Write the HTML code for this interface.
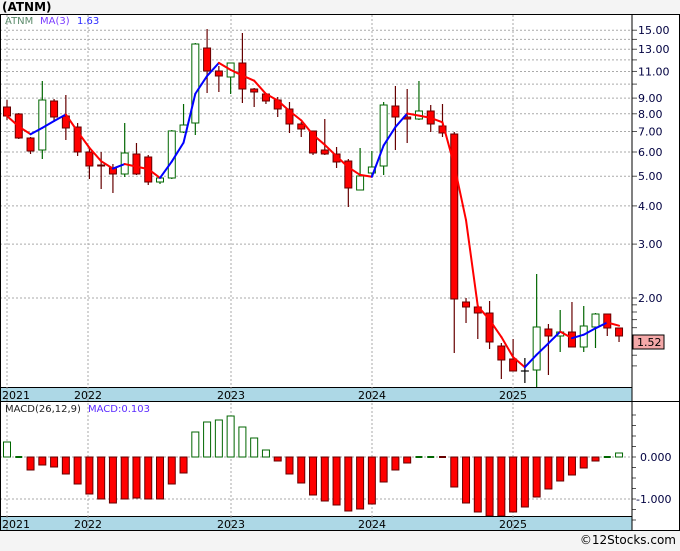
<!DOCTYPE html>
<html><head><meta charset="utf-8"><style>
html,body{margin:0;padding:0;background:#f4f4f4;}
body{width:680px;height:546px;overflow:hidden;font-family:"Liberation Sans",sans-serif;}
svg text{font-family:"DejaVu Sans","Liberation Sans",sans-serif;}
</style></head><body>
<svg id="s" width="680" height="546" xmlns="http://www.w3.org/2000/svg">
<rect x="0" y="0" width="680" height="546" fill="#f4f4f4"/>
<rect x="0" y="14" width="680" height="516" fill="#ffffff"/>
<text x="2" y="11" font-size="12" font-weight="bold" fill="#000">(ATNM)</text>
<g id="g"></g>
<rect x="0" y="387" width="632" height="14" fill="#add8e6"/>
<rect x="0" y="516" width="632" height="14" fill="#add8e6"/>
<line x1="0" y1="14.5" x2="680" y2="14.5" stroke="#000"/>
<line x1="0" y1="387.5" x2="632" y2="387.5" stroke="#000"/>
<line x1="0" y1="401.5" x2="680" y2="401.5" stroke="#000"/>
<line x1="0" y1="516.5" x2="632" y2="516.5" stroke="#000"/>
<line x1="0" y1="530.5" x2="680" y2="530.5" stroke="#000"/>
<line x1="632" y1="14" x2="632" y2="530" stroke="#000"/>
<line x1="679.5" y1="14" x2="679.5" y2="530" stroke="#000"/>
<line x1="0.5" y1="14" x2="0.5" y2="530" stroke="#000"/>
<g id="g2"></g>
<text x="5" y="24" font-size="10" fill="#5a8a6a">ATNM</text>
<text x="40" y="24" font-size="10" fill="#7a3cff">MA(3)</text>
<text x="77" y="24" font-size="10" fill="#2a2aff">1.63</text>
<text x="5" y="412" font-size="10" fill="#222">MACD(26,12,9)</text>
<text x="88" y="412" font-size="10" fill="#5a2aff">MACD:0.103</text>
<text x="676" y="544" font-size="12" fill="#000" text-anchor="end" font-family="Liberation Sans">©12Stocks.com</text>
</svg>
<script>
var NS="http://www.w3.org/2000/svg",g=document.getElementById('g'),g2=document.getElementById('g2');
function el(t,a,txt,par){var e=document.createElementNS(NS,t);for(var k in a)e.setAttribute(k,a[k]);if(txt)e.textContent=txt;(par||g).appendChild(e);return e;}
function py(p){return 298-(Math.log10(p)-0.30103)*306;}
for(var p=2;p<=15;p++){var y=py(p);if(y>15)el('line',{x1:0,y1:y,x2:632,y2:y,stroke:'#aaa','stroke-dasharray':'2,2'});}
for(var p=2;p<=15;p++){var y=py(p);if(y>15)el('line',{x1:632,y1:y,x2:637,y2:y,stroke:'#555'});}
[1.9,1.8,1.7,1.6,1.5,1.4,1.3,1.2].forEach(function(p){var y=py(p);if(y<402)el('line',{x1:632,y1:y,x2:637,y2:y,stroke:'#555'});});
var labs=[15,13,11,9,8,7,6,5,4,3,2];
labs.forEach(function(p){el('text',{x:638,y:py(p)+4,'font-size':11,fill:'#000040'},p.toFixed(2));});
var yrs=[[7,'2021',2],[88,'2022'],[231,'2023'],[372,'2024'],[513,'2025']];
yrs.forEach(function(a){el('line',{x1:a[0],y1:15,x2:a[0],y2:530,stroke:'#aaa','stroke-dasharray':'2,2'});});
el('line',{x1:0,y1:457,x2:632,y2:457,stroke:'#aaa','stroke-dasharray':'2,2'});
el('line',{x1:0,y1:499,x2:632,y2:499,stroke:'#aaa','stroke-dasharray':'2,2'});
for(var y=415;y<530;y+=10.5)el('line',{x1:632,y1:y,x2:636,y2:y,stroke:'#555'});
el('text',{x:640,y:461,'font-size':11,fill:'#000040'},'0.000');
el('text',{x:636,y:503,'font-size':11,fill:'#000040'},'-1.000');
var C=[[100,107,116,120,0],[113,114,138,139,0],[137,138,151,154,0],[81,100,150,159,1],[99,101,117,121,0],[95,116,128,140,0],[123,127,152,156,0],[147,152,166,179,0],[152,165,166,189,0],[164,168,174,193,0],[123,153,174,177,1],[143,154,174,175,0],[155,157,182,185,0],[177,178,182,184,1],[130,131,178,179,1],[104,125,132,133,1],[43,44,123,135,1],[29,48,71,93,0],[66,71,76,92,0],[63,63,77,94,1],[33,63,89,103,0],[88,89,92,107,0],[93,94,101,104,0],[97,100,109,117,0],[102,109,124,133,0],[122,124,129,137,0],[131,131,153,155,0],[119,150,154,155,0],[147,154,162,168,0],[159,161,188,207,0],[148,176,190,190,1],[151,167,173,176,1],[102,105,166,175,1],[86,106,117,150,0],[89,117,119,143,0],[81,111,119,120,1],[105,111,124,132,0],[104,126,133,137,0],[132,134,299,353,0],[298,302,307,323,0],[305,307,313,339,0],[301,313,342,349,0],[343,346,360,379,0],[339,359,371,371,0],[358,371,372,383,2],[274,327,370,387,1],[324,329,336,375,0],[310,332,336,352,1],[302,332,347,347,0],[306,326,347,352,1],[313,314,327,348,1],[314,314,328,336,0],[328,328,336,342,0]];
function cx(i){return 7+i*11.77;}
var closes=[];
C.forEach(function(c,i){var x=cx(i);
 var wc=c[4]==1?'#006600':(c[4]==2?'#000':'#660000');
 el('line',{x1:x,y1:c[0],x2:x,y2:Math.min(c[3],387),stroke:wc,'stroke-width':1.2});
 if(c[4]==2){el('line',{x1:x-4,y1:c[1],x2:x+4,y2:c[1],stroke:'#000','stroke-width':1.2});closes.push(c[1]);}
 else{el('rect',{x:x-3.5,y:c[1],width:7,height:Math.max(c[2]-c[1],1),fill:c[4]?'#fff':'#ff0000',stroke:wc,'stroke-width':1});
 closes.push(c[4]?c[1]:c[2]);}
});
function pp(y){return Math.pow(10,0.30103+(298-y)/306);}
var ma=[];
closes.forEach(function(y,i){var s=0,n=0;for(var j=Math.max(0,i-2);j<=i;j++){s+=pp(closes[j]);n++;}ma.push(py(s/n));});
for(var i=1;i<ma.length;i++){el('line',{x1:cx(i-1),y1:ma[i-1],x2:cx(i),y2:ma[i],stroke:ma[i]<ma[i-1]?'#0000ff':'#ff0000','stroke-width':2,'stroke-linecap':'round'});}
el('rect',{x:633,y:335,width:31,height:14,fill:'#f4a8a8',stroke:'#000'});
el('text',{x:637,y:346,'font-size':11,fill:'#000'},'1.52');
var H=[15,1,-13,-8,-10,-17,-27,-37,-42,-46,-42,-41,-42,-42,-27,-16,25,35,37,41,30,19,7,-4,-17,-26,-38,-44,-48,-54,-52,-47,-25,-13,-6,1,1,-1,-30,-46,-55,-59,-59,-55,-50,-40,-32,-24,-18,-11,-4,1,4];
H.forEach(function(h,i){var x=cx(i);
 if(Math.abs(h)<=1){el('line',{x1:x-3.5,y1:457,x2:x+3.5,y2:457,stroke:h<0?'#660000':'#006600','stroke-width':2});return;}
 var y0=h>0?457-h:457,hh=Math.abs(h);if(y0+hh>516)hh=516-y0;
 el('rect',{x:x-3.5,y:y0,width:7,height:hh,fill:h>0?'#fff':'#ff0000',stroke:h>0?'#006600':'#660000','stroke-width':1});
});
yrs.forEach(function(a){el('line',{x1:a[0],y1:387,x2:a[0],y2:401,stroke:'#888','stroke-dasharray':'2,2'},null,g2);el('line',{x1:a[0],y1:516,x2:a[0],y2:530,stroke:'#888','stroke-dasharray':'2,2'},null,g2);
 [399,528].forEach(function(y){el('text',{x:a[2]!==undefined?a[2]:a[0]-14,y:y,'font-size':11,fill:'#000'},a[1],g2);});});
</script>
</body></html>
